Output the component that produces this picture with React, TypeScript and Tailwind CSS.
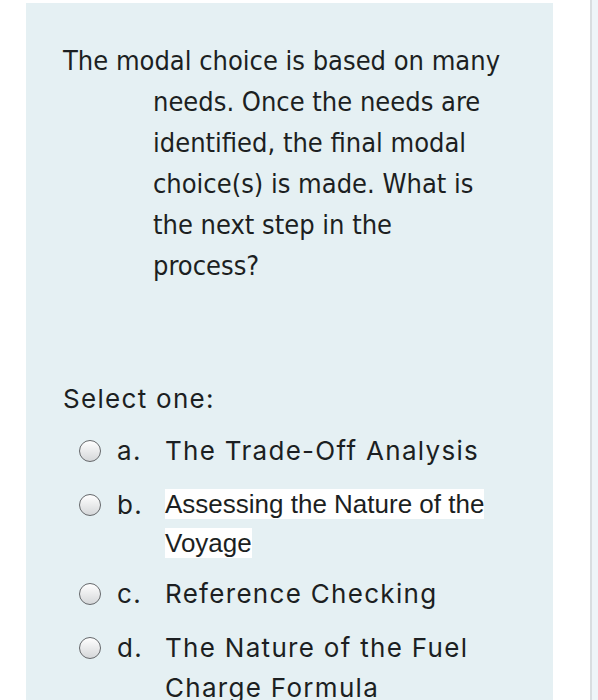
import React from "react";

const questionLines = [
  "needs. Once the needs are",
  "identified, the final modal",
  "choice(s) is made. What is",
  "the next step in the",
  "process?",
];

function Radio() {
  return (
    <span className="block size-[22px] shrink-0 rounded-full border-[1.5px] border-[#65686b] bg-gradient-to-b from-[#ffffff] to-[#d5d7d9]" />
  );
}

function Option({
  letter,
  children,
  className = "",
}: {
  letter: string;
  children: React.ReactNode;
  className?: string;
}) {
  return (
    <div className={`flex items-start pl-[53px] ${className}`}>
      <div className="flex h-[40px] items-center">
        <Radio />
      </div>
      <span className="ml-[16px] w-[48px] shrink-0 text-[26px] leading-[40px] tracking-[1.3px]">
        {letter}
      </span>
      <div className="min-w-0 flex-1">{children}</div>
    </div>
  );
}

export default function App() {
  return (
    <div className="flex h-[700px] w-[598px] overflow-hidden bg-white text-[#1c1f22]">
      <div className="mt-[3px] ml-[26px] w-[527px] shrink-0 bg-[#e5f0f3] font-['Inter',sans-serif]">
        <div className="pt-[37px] pl-[37px] font-['DejaVu_Sans_Condensed','DejaVu_Sans',sans-serif] text-[27px] leading-[41px]">
          <div>The modal choice is based on many</div>
          {questionLines.map((line) => (
            <div key={line} className="pl-[90px]">
              {line}
            </div>
          ))}
        </div>

        <div className="mt-[95px] pl-[37px] text-[26px] leading-[36px] tracking-[1.3px]">
          Select one:
        </div>

        <div className="mt-[14px] text-[26px] leading-[40px] tracking-[1.3px]">
          <Option letter="a.">
            <span>The Trade-Off Analysis</span>
          </Option>
          <Option letter="b." className="mt-[14px]">
            <div className="font-['Liberation_Sans',Arial,sans-serif] text-[26px] leading-[39px] tracking-normal">
              <span className="bg-white">Assessing the Nature of the</span>
              <br />
              <span className="bg-white">Voyage</span>
            </div>
          </Option>
          <Option letter="c." className="mt-[11px]">
            <span>Reference Checking</span>
          </Option>
          <Option letter="d." className="mt-[14px]">
            <div>
              The Nature of the Fuel
              <br />
              Charge Formula
            </div>
          </Option>
        </div>
      </div>
      <div className="w-[37px] shrink-0" />
      <div className="w-[2px] shrink-0 bg-[#d9dde0]" />
      <div className="flex-1 bg-[#eef4f8]" />
    </div>
  );
}
